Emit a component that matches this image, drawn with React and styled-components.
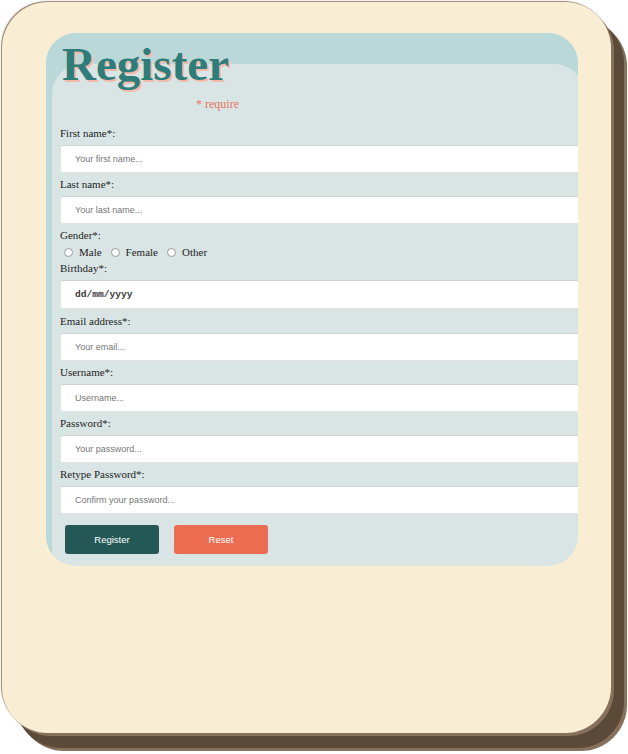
import React from 'react';
import styled, { createGlobalStyle } from 'styled-components';

const GlobalStyle = createGlobalStyle`
  body {
    margin: 0;
    background: #ffffff;
    font-family: 'Liberation Serif', 'Times New Roman', serif;
  }
`;

const Page = styled.div`
  box-sizing: border-box;
  min-height: 754px;
  padding: 2px;
`;

const Card = styled.div`
  box-sizing: border-box;
  width: 609px;
  height: 731px;
  padding: 31px 33px 0 44px;
  background: #f9eed4;
  border-radius: 46px;
  box-shadow: -1px -1px 1px #9a8672, 3px 3px 0 #86715d, 13px 15px 0 #5b4a37,
    16px 18px 0 #86715d;
`;

const Panel = styled.div`
  position: relative;
  overflow: hidden;
  padding: 0 0 12px 14px;
  background: #d9e5e4;
  border-radius: 30px;
  box-shadow: inset 6px 31px 0 #bbd8d9;
`;

const Title = styled.h1`
  margin: 0;
  padding: 8px 0 0 2px;
  font-size: 47px;
  line-height: 47px;
  font-weight: 700;
  color: #2e7d7a;
  text-shadow: 2px 2px 0 #f3b9a8;
`;

const Require = styled.div`
  margin-top: 9px;
  padding-left: 136px;
  font-size: 12px;
  line-height: 14px;
  color: #e8735a;
`;

const Form = styled.form`
  margin-top: 15px;
`;

const Label = styled.label`
  display: block;
  margin: ${({ $top = 4 }) => $top}px 0 ${({ $bottom = 5 }) => $bottom}px;
  font-size: 11px;
  line-height: 14px;
  color: #1e1e1e;
`;

const Input = styled.input`
  display: block;
  box-sizing: border-box;
  width: 540px;
  height: ${({ $tall }) => ($tall ? 29 : 28)}px;
  padding: 0 14px;
  border: 1px solid #e2e4e4;
  border-top-color: #cfd3d3;
  border-radius: 3px;
  background: #ffffff;
  font-family: 'Liberation Sans', Arial, sans-serif;
  font-size: 9px;
  color: #333;
  outline: none;

  &::placeholder {
    color: #767676;
  }
`;

const DateInput = styled(Input)`
  font-family: 'Liberation Mono', 'Courier New', monospace;
  font-size: 9.6px;
  font-weight: 700;
  color: #3a3a3a;
`;

const RadioRow = styled.div`
  display: flex;
  align-items: center;
  height: 16px;
  margin-top: 2px;
  padding-left: 4px;
  font-size: 11px;
  color: #1e1e1e;
`;

const RadioOption = styled.label`
  display: flex;
  align-items: center;
  gap: 6px;
  margin-right: 9px;
`;

const Radio = styled.input`
  appearance: none;
  box-sizing: border-box;
  width: 9px;
  height: 9px;
  margin: 0;
  border: 1px solid #9a9a9a;
  border-radius: 50%;
  background: #ffffff;
`;

const Actions = styled.div`
  display: flex;
  gap: 15px;
  margin: 11px 0 0 5px;
`;

const Button = styled.button`
  width: 94px;
  height: 29px;
  border: none;
  border-radius: 3px;
  background: ${({ $variant }) => ($variant === 'reset' ? '#ec6c52' : '#235857')};
  color: #ffffff;
  font-family: 'Liberation Sans', Arial, sans-serif;
  font-size: 9.5px;
  cursor: pointer;
`;

const fields = [
  { label: 'Email address*:', placeholder: 'Your email...', type: 'email', top: 5 },
  { label: 'Username*:', placeholder: 'Username...', type: 'text' },
  { label: 'Password*:', placeholder: 'Your password...', type: 'password' },
  { label: 'Retype Password*:', placeholder: 'Confirm your password...', type: 'password' },
];

const App = () => {
  return (
    <Page>
      <GlobalStyle />
      <Card>
        <Panel>
          <Title>Register</Title>
          <Require>* require</Require>
          <Form onSubmit={(e) => e.preventDefault()}>
            <Label>First name*:</Label>
            <Input placeholder="Your first name..." />
            <Label>Last name*:</Label>
            <Input placeholder="Your last name..." />
            <Label $bottom={0}>Gender*:</Label>
            <RadioRow>
              {['Male', 'Female', 'Other'].map((g) => (
                <RadioOption key={g}>
                  <Radio type="radio" name="gender" value={g} />
                  {g}
                </RadioOption>
              ))}
            </RadioRow>
            <Label $top={1}>Birthday*:</Label>
            <DateInput $tall defaultValue="dd/mm/yyyy" />
            {fields.map((f) => (
              <React.Fragment key={f.label}>
                <Label $top={f.top}>{f.label}</Label>
                <Input type={f.type} placeholder={f.placeholder} />
              </React.Fragment>
            ))}
            <Actions>
              <Button type="submit">Register</Button>
              <Button type="reset" $variant="reset">
                Reset
              </Button>
            </Actions>
          </Form>
        </Panel>
      </Card>
    </Page>
  );
};

export default App;
